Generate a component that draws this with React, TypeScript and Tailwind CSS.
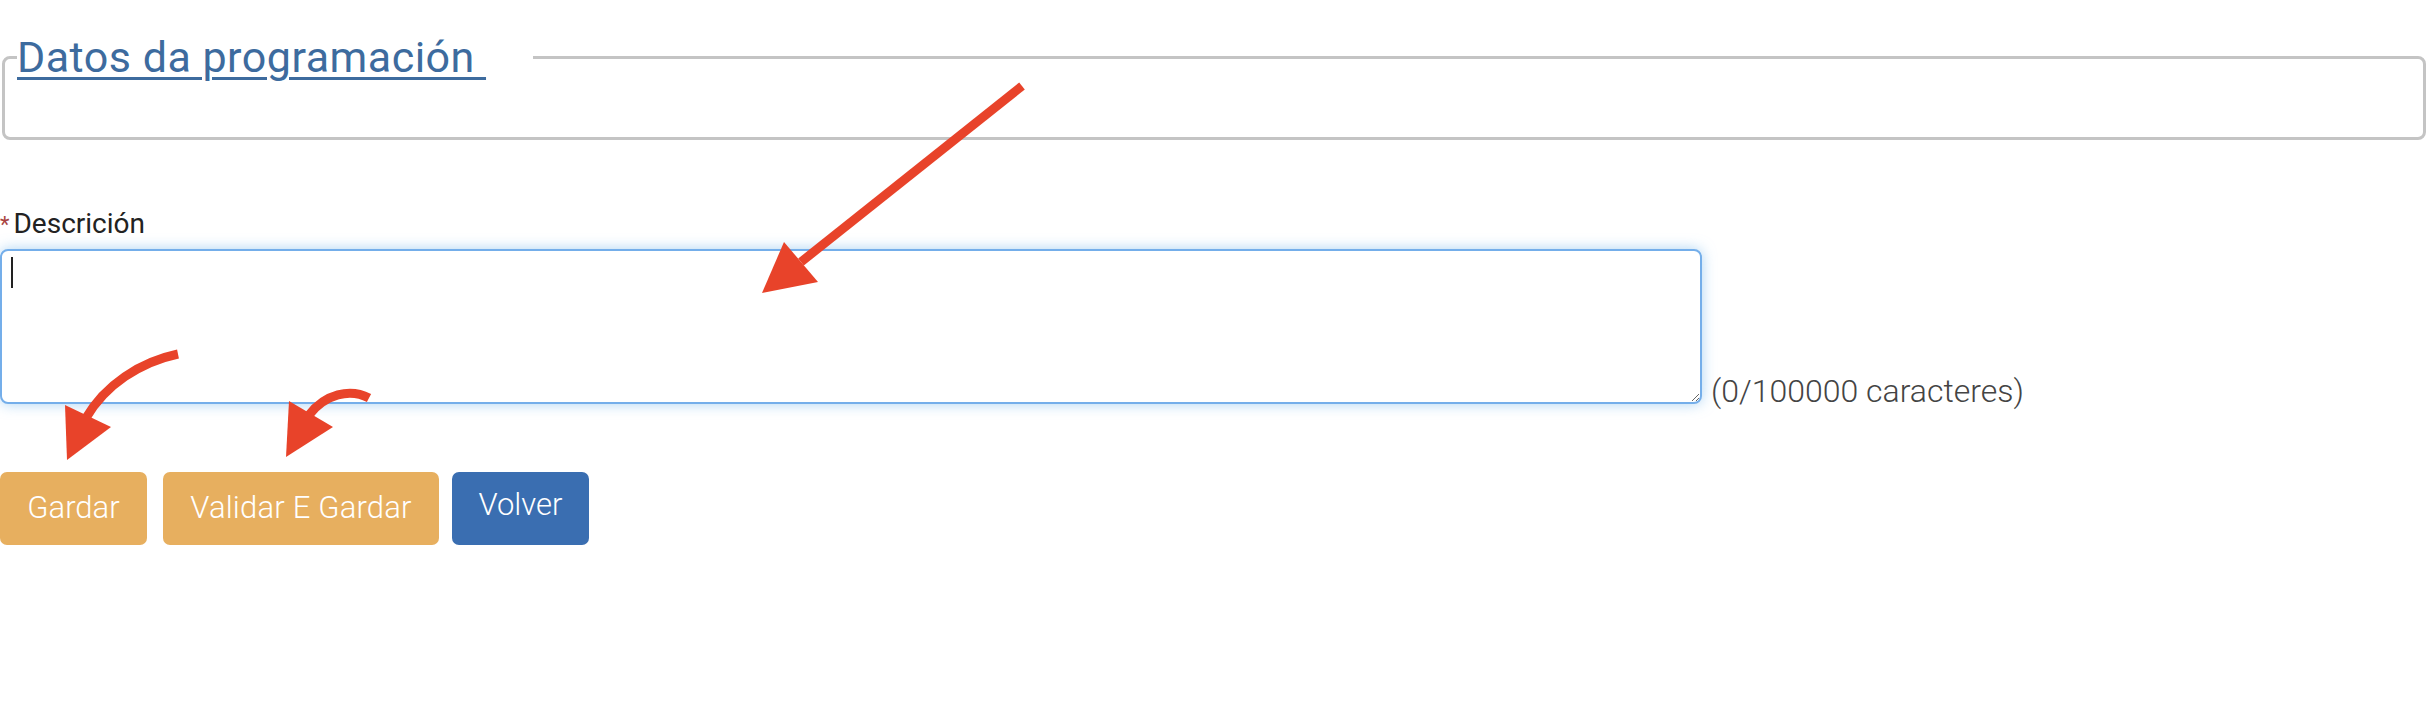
import React from 'react';

// Arrow annotations drawn over the form
function Annotations() {
    const red = '#e8432a';
    return (
        <svg
            className="pointer-events-none absolute left-0 top-0"
            width="2432"
            height="716"
            viewBox="0 0 2432 716"
        >
            {/* big arrow pointing at the textarea */}
            <line x1="1022" y1="86" x2="801" y2="262" stroke={red} strokeWidth="9" />
            <polygon points="784,242 818,282 762,293" fill={red} />

            {/* curved arrow to Gardar */}
            <path d="M178,354 C140,362 105,385 86,418" stroke={red} strokeWidth="9" fill="none" />
            <polygon points="65,405 111,427 67,460" fill={red} />

            {/* curved arrow to Validar E Gardar */}
            <path d="M369,398 C350,388 325,394 309,415" stroke={red} strokeWidth="9" fill="none" />
            <polygon points="289,401 333,427 286,457" fill={red} />
        </svg>
    );
}

export default function App() {
    return (
        <main
            className="relative min-h-[716px] w-full bg-white"
            style={{ fontFamily: 'Roboto, "Liberation Sans", sans-serif' }}
        >
            <div className="pt-[33px]">
                {/* Datos da programación */}
                <fieldset className="ml-[2px] mr-[6px] rounded-lg border-[3px] border-[#c4c4c4]">
                    <legend className="ml-[12px] pr-[47px] text-[43px] leading-[48px] tracking-[0.5px] text-[#3d6b9e]">
                        <a className="underline decoration-[3px] underline-offset-[5px]">Datos da programación&nbsp;</a>
                    </legend>
                    <div className="h-[56px]" />
                </fieldset>

                {/* Descrición */}
                <div className="mt-[68px]">
                    <label className="flex items-start text-[28px] leading-[32px] text-[#222]">
                        <span className="mr-[4px] mt-[1px] text-[22px] text-[#a94442]">*</span>
                        Descrición
                    </label>
                    <div className="mt-[8px] flex items-end">
                        <div className="relative">
                            <textarea
                                className="block h-[155px] w-[1702px] rounded-lg border-2 border-[#74aeea] bg-white px-[10px] py-[6px] text-[27px] shadow-[0_0_14px_rgba(102,175,233,0.55)] outline-none"
                                defaultValue=""
                            />
                            <span className="absolute left-[11px] top-[8px] h-[31px] w-[2px] bg-[#222]" />
                        </div>
                        <span className="-mb-[3px] ml-[9px] text-[32px] font-light leading-[32px] text-[#444]">
                            (0/100000 caracteres)
                        </span>
                    </div>
                </div>

                {/* Botóns */}
                <div className="mt-[68px] flex items-center">
                    <button className="flex h-[73px] w-[147px] items-center justify-center rounded-[7px] bg-[#e7af5f] text-[31px] font-light text-white">
                        Gardar
                    </button>
                    <button className="ml-[16px] flex h-[73px] w-[276px] items-center justify-center rounded-[7px] bg-[#e7af5f] text-[31px] font-light tracking-[0.2px] text-white">
                        Validar E Gardar
                    </button>
                    <button className="ml-[13px] flex h-[73px] w-[137px] items-center justify-center rounded-[7px] bg-[#3a6eb1] pb-[6px] text-[31px] font-light text-white">
                        Volver
                    </button>
                </div>
            </div>

            <Annotations />
        </main>
    );
}
